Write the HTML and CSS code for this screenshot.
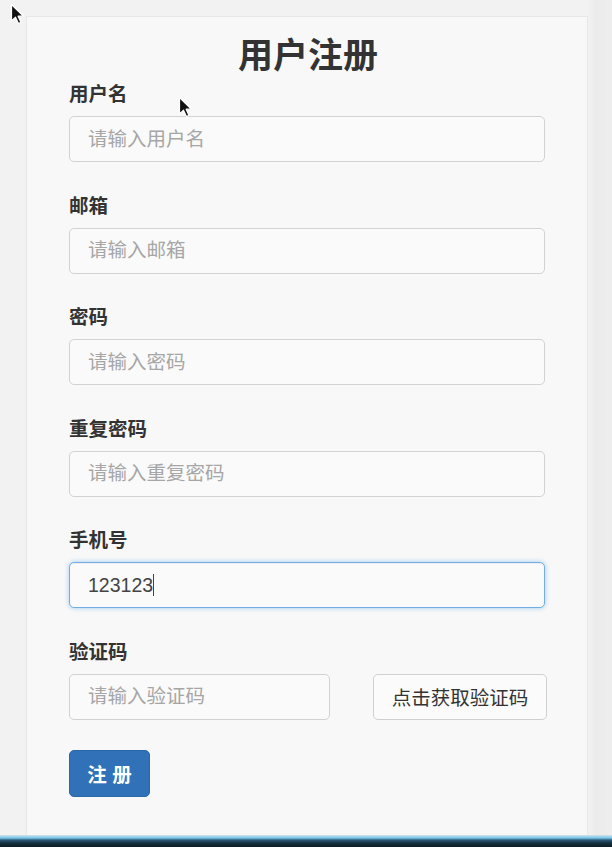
FILE: index.html
```html
<!DOCTYPE html>
<html lang="zh-CN">
<head>
<meta charset="utf-8">
<title>用户注册</title>
<link rel="stylesheet" href="styles.css">
</head>
<body>
<div class="screen">
  <main class="stage">
    <form class="card">
      <h1 class="title">用户注册</h1>
      <div class="group">
        <label class="label">用户名</label>
        <input class="field" type="text" placeholder="请输入用户名">
      </div>
      <div class="group">
        <label class="label">邮箱</label>
        <input class="field" type="text" placeholder="请输入邮箱">
      </div>
      <div class="group">
        <label class="label">密码</label>
        <input class="field" type="password" placeholder="请输入密码">
      </div>
      <div class="group">
        <label class="label">重复密码</label>
        <input class="field" type="password" placeholder="请输入重复密码">
      </div>
      <div class="group">
        <label class="label">手机号</label>
        <div class="caret-wrap">
          <input class="field field-focus" type="text" value="123123">
          <span class="caret"></span>
        </div>
      </div>
      <div class="group">
        <label class="label">验证码</label>
        <div class="code-row">
          <input class="field field-code" type="text" placeholder="请输入验证码">
          <button class="btn-code" type="button">点击获取验证码</button>
        </div>
      </div>
      <button class="btn-submit" type="button">注 册</button>
    </form>
  </main>
  <div class="taskbar"></div>
</div>
<svg class="cursor cursor-a" width="16" height="22" viewBox="0 0 16 22"><path d="M1.5 1.5 L1.5 18 L5.5 14.2 L8.5 20.5 L11 19.4 L8.1 13.2 L13.5 13.2 Z" fill="#111" stroke="#fff" stroke-width="1.2" stroke-linejoin="round"/></svg>
<svg class="cursor cursor-b" width="16" height="22" viewBox="0 0 16 22"><path d="M1.5 1.5 L1.5 18 L5.5 14.2 L8.5 20.5 L11 19.4 L8.1 13.2 L13.5 13.2 Z" fill="#111" stroke="#fff" stroke-width="1.2" stroke-linejoin="round"/></svg>
</body>
</html>
```
FILE: styles.css
```css
* { box-sizing: border-box; }
html, body { margin: 0; padding: 0; }
body {
  background: #f1f1f1;
  font-family: "Liberation Sans", "Noto Sans CJK SC", sans-serif;
  color: #333;
  width: 612px;
  height: 847px;
  overflow: hidden;
}
.screen {
  height: 847px;
  display: flex;
  flex-direction: column;
}
.stage {
  flex: 1;
  padding: 16px 0 0 26px;
  overflow: hidden;
  background: linear-gradient(to right, #f2f2f2 0, #f2f2f2 588px, #ebebeb 596px, #ededed 612px);
}
.card {
  width: 562px;
  height: 100%;
  background: #f8f8f8;
  border: 1px solid #e7e7e7;
  border-bottom: none;
  padding: 17px 42px 0 42px;
  display: flex;
  flex-direction: column;
}
.title {
  margin: 0;
  font-size: 35px;
  line-height: 44px;
  font-weight: 700;
  text-align: center;
  color: #333;
  padding-left: 2px;
}
.group {
  display: flex;
  flex-direction: column;
  margin-top: 4px;
  margin-bottom: 31.5px;
}
.group + .group { margin-top: 0; }
.label {
  font-size: 19.5px;
  line-height: 24px;
  font-weight: 700;
  color: #333;
  margin-bottom: 10px;
}
.field {
  width: 100%;
  height: 46px;
  border: 1px solid #d2d2d2;
  border-radius: 5px;
  background: #fafafa;
  padding: 0 18px;
  font-family: inherit;
  font-size: 19.5px;
  color: #555;
  outline: none;
}
.field::placeholder { color: #a6a6a6; }
.field-focus {
  border-color: #72ade5;
  box-shadow: 0 0 5px rgba(102, 175, 233, 0.6), inset 0 1px 1px rgba(0,0,0,0.05);
  color: #444;
}
.caret-wrap { position: relative; }
.caret {
  position: absolute;
  left: 84px;
  top: 12px;
  width: 1px;
  height: 22px;
  background: #444;
}
.code-row {
  display: flex;
  justify-content: space-between;
  margin-right: -2px;
}
.field-code { width: 261px; }
.btn-code {
  width: 174px;
  height: 46px;
  border: 1px solid #d0d0d0;
  border-radius: 5px;
  background: #fbfbfb;
  font-family: inherit;
  font-size: 19.5px;
  color: #333;
  padding: 0;
}
.btn-submit {
  align-self: flex-start;
  margin-top: -1.5px;
  width: 81px;
  height: 47px;
  border: 1px solid #2a66a8;
  border-radius: 5px;
  background: #3171b7;
  color: #fff;
  font-family: inherit;
  font-size: 19.5px;
  font-weight: 700;
  padding: 0;
}
.taskbar {
  height: 12px;
  background: linear-gradient(to bottom, #ecdcd8 0, #a9dcf2 1px, #7cc4e8 3px, #2b5d7a 5px, #14303f 8px, #0d1c26 12px);
}
.cursor { position: absolute; }
.cursor-a { left: 10px; top: 3px; }
.cursor-b { left: 178px; top: 96px; }
```
